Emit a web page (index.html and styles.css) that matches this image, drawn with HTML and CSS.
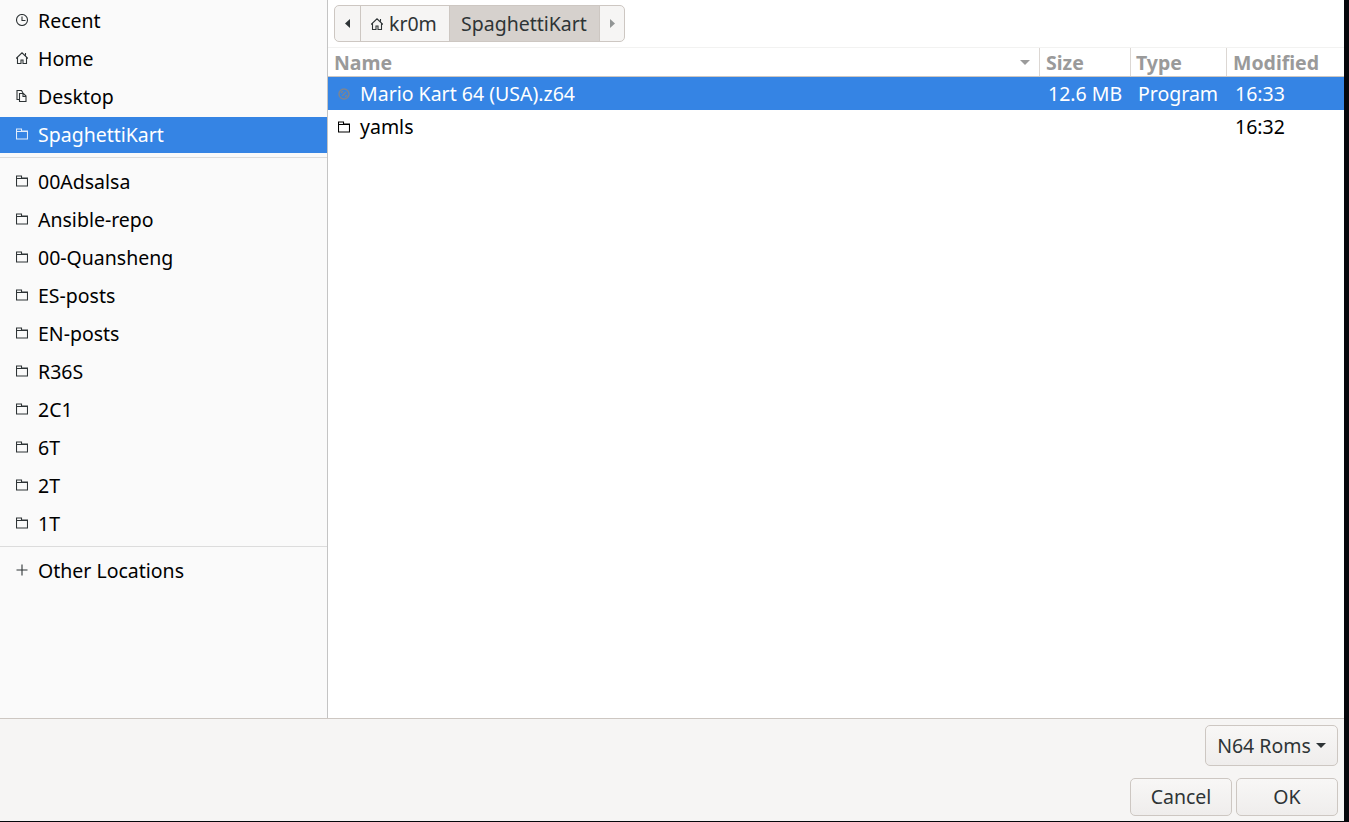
FILE: index.html
```html
<!DOCTYPE html>
<html lang="en">
  <head>
    <meta charset="UTF-8" />
    <title>Open File</title>
    <link rel="stylesheet" href="styles.css">
  </head>

  <body>
    <div class="dialog">
      <div class="panes">
        <!-- places sidebar -->
        <aside class="sidebar">
          <div class="place">
            <svg class="icon" viewBox="0 0 12 12"><circle cx="6" cy="6" r="5.500"/><path d="M6 2.500V6.500H9.500"/></svg>
            <span>Recent</span>
          </div>
          <div class="place">
            <svg class="icon" viewBox="0 0 12 12"><path d="M0 6.500 6 .8l6 5.700M1.500 5.500v6H5V8h2v3.500h3.500v-6M9.500 1v2.500"/></svg>
            <span>Home</span>
          </div>
          <div class="place">
            <svg class="icon" viewBox="0 0 12 12"><path d="M3.500 9.500h-2.500V.5h4.500l1.500 2.500M3.500 3.500h4l2.500 2.500v5.500H3.500zM7 3.500V6.500h3"/></svg>
            <span>Desktop</span>
          </div>
          <div class="place active">
            <svg class="icon" viewBox="0 0 12 12"><path d="M.5 1h5v2h6v8H.5zM.5 3.500h11"/></svg>
            <span>SpaghettiKart</span>
          </div>
          <hr class="sep">
          <div class="place">
            <svg class="icon" viewBox="0 0 12 12"><path d="M.5 1h5v2h6v8H.5zM.5 3.500h11"/></svg>
            <span>00Adsalsa</span>
          </div>
          <div class="place">
            <svg class="icon" viewBox="0 0 12 12"><path d="M.5 1h5v2h6v8H.5zM.5 3.500h11"/></svg>
            <span>Ansible-repo</span>
          </div>
          <div class="place">
            <svg class="icon" viewBox="0 0 12 12"><path d="M.5 1h5v2h6v8H.5zM.5 3.500h11"/></svg>
            <span>00-Quansheng</span>
          </div>
          <div class="place">
            <svg class="icon" viewBox="0 0 12 12"><path d="M.5 1h5v2h6v8H.5zM.5 3.500h11"/></svg>
            <span>ES-posts</span>
          </div>
          <div class="place">
            <svg class="icon" viewBox="0 0 12 12"><path d="M.5 1h5v2h6v8H.5zM.5 3.500h11"/></svg>
            <span>EN-posts</span>
          </div>
          <div class="place">
            <svg class="icon" viewBox="0 0 12 12"><path d="M.5 1h5v2h6v8H.5zM.5 3.500h11"/></svg>
            <span>R36S</span>
          </div>
          <div class="place">
            <svg class="icon" viewBox="0 0 12 12"><path d="M.5 1h5v2h6v8H.5zM.5 3.500h11"/></svg>
            <span>2C1</span>
          </div>
          <div class="place">
            <svg class="icon" viewBox="0 0 12 12"><path d="M.5 1h5v2h6v8H.5zM.5 3.500h11"/></svg>
            <span>6T</span>
          </div>
          <div class="place">
            <svg class="icon" viewBox="0 0 12 12"><path d="M.5 1h5v2h6v8H.5zM.5 3.500h11"/></svg>
            <span>2T</span>
          </div>
          <div class="place">
            <svg class="icon" viewBox="0 0 12 12"><path d="M.5 1h5v2h6v8H.5zM.5 3.500h11"/></svg>
            <span>1T</span>
          </div>
          <hr class="sep">
          <div class="place">
            <svg class="icon" viewBox="0 0 12 12"><path d="M6 .5v11M.5 6h11"/></svg>
            <span>Other Locations</span>
          </div>
        </aside>

        <main class="files">
          <div class="pathrow">
            <div class="pathbar">
              <div class="arrow"><svg width="6" height="9" viewBox="0 0 6 9"><path d="M5 0v9L0 4.500z" fill="#2e3436"/></svg></div>
              <div class="crumb">
                <svg class="icon" viewBox="0 0 12 12"><path d="M0 6.500 6 .8l6 5.700M1.500 5.500v6H5V8h2v3.500h3.500v-6M9.500 1v2.500"/></svg>
                <span>kr0m</span>
              </div>
              <div class="crumb current">SpaghettiKart</div>
              <div class="arrow right"><svg width="6" height="9" viewBox="0 0 6 9"><path d="M1 0v9l5-4.500z" fill="#929595"/></svg></div>
            </div>
          </div>

          <div class="cols head">
            <div class="name">Name<svg class="sort" width="10" height="5" viewBox="0 0 10 5"><path d="M0 0h10L5 5z" fill="#9b9b9b"/></svg></div>
            <div class="size">Size</div>
            <div class="type">Type</div>
            <div class="mod">Modified</div>
          </div>

          <div class="cols row selected">
            <div class="name">
              <svg class="fileicon" viewBox="0 0 12 12"><circle cx="6" cy="6" r="5" fill="none" stroke="#7d8590" stroke-width="1.500"/><path d="M3 5 5 3M7 9l2-2M4 8 8 4" stroke="#7d8590" stroke-width="1.500"/></svg>
              <span>Mario Kart 64 (USA).z64</span>
            </div>
            <div class="size">12.6 MB</div>
            <div class="type">Program</div>
            <div class="mod">16:33</div>
          </div>
          <div class="cols row">
            <div class="name">
              <svg class="fileicon dark" viewBox="0 0 12 12"><path d="M.5 1h5v2h6v8H.5zM.5 3.500h11"/></svg>
              <span>yamls</span>
            </div>
            <div class="size"></div>
            <div class="type"></div>
            <div class="mod">16:32</div>
          </div>
        </main>
      </div>

      <footer class="actions">
        <div class="filter">
          <button type="button" class="btn combo">N64 Roms<i class="caret"></i></button>
        </div>
        <div class="confirm">
          <button type="button" class="btn cancel">Cancel</button>
          <button type="button" class="btn ok">OK</button>
        </div>
      </footer>
    </div>
  </body>
</html>
```

FILE: styles.css
```css
* {
  box-sizing: border-box;
  margin: 0;
  padding: 0;
}

html, body {
  height: 100%;
}

body {
  background: #05070b;
  font-family: "Noto Sans", sans-serif;
  font-size: 19.5px;
  color: #000;
  overflow: hidden;
}

.dialog {
  width: 1344px;
  height: 821px;
  display: flex;
  flex-direction: column;
  background: #f6f5f4;
}

.panes {
  height: 718px;
  display: flex;
  background: #fff;
}

/* sidebar */
.sidebar {
  width: 328px;
  flex: none;
  padding-top: 1px;
  background: #fafafa;
  border-right: 1px solid #c4c4c4;
}

.place {
  height: 38px;
  display: flex;
  align-items: center;
  padding-left: 16px;
  gap: 10px;
}

.place.active {
  background: #3584e4;
  color: #fff;
  height: 36px;
  margin-top: 2px;
  margin-bottom: 1px;
  padding-bottom: 2px;
}

.icon {
  width: 12px;
  height: 12px;
  flex: none;
  fill: none;
  stroke: #2e3436;
  stroke-width: 1.100;
}

.active .icon {
  stroke: #fff;
  opacity: .85;
}

.sep {
  border: 0;
  border-top: 1px solid #dcdcdc;
  margin: 4px 0;
  height: 1px;
}

/* path bar */
.files {
  flex: 1;
  min-width: 0;
}

.pathrow {
  height: 48px;
  padding: 5px 0 0 6px;
  border-bottom: 1px solid #f2f2f1;
}

.pathbar {
  display: inline-flex;
  height: 37px;
  border: 1px solid #cdc7c2;
  border-radius: 5px;
  overflow: hidden;
  color: #2e3436;
  background: #f6f5f4;
}

.arrow {
  width: 26px;
  display: flex;
  align-items: center;
  justify-content: center;
  border-right: 1px solid #cdc7c2;
}

.arrow.right {
  width: 24px;
  border-right: 0;
}

.crumb {
  width: 88px;
  display: flex;
  align-items: center;
  gap: 6px;
  padding-left: 10px;
}

.crumb.current {
  width: 151px;
  background: #d6d1cd;
  padding-left: 11px;
  border-left: 1px solid #cdc7c2;
  border-right: 1px solid #cdc7c2;
}

/* file list */
.cols {
  display: grid;
  grid-template-columns: 712px 91px 96px 1fr;
}

.head {
  height: 29px;
  font-weight: 700;
  color: #9a9a9a;
  border-bottom: 1px solid #cdc7c2;
}

.head > div {
  display: flex;
  align-items: center;
  padding-left: 6px;
  padding-top: 1px;
  border-right: 1px solid #dcd7d3;
}

.head > .type {
  padding-left: 5px;
}

.head > .mod {
  border-right: 0;
}

.sort {
  margin-left: auto;
  margin-right: 9px;
}

.row {
  height: 33px;
  line-height: 33px;
}

.row .name {
  display: flex;
  align-items: center;
  padding-left: 10px;
  gap: 10px;
}

.row .size {
  padding-left: 8px;
}

.row .type {
  padding-left: 7px;
}

.row .mod {
  padding-left: 8px;
}

.selected {
  background: #3584e4;
  color: #fff;
}

.fileicon {
  width: 12px;
  height: 12px;
  flex: none;
}

.fileicon.dark {
  fill: none;
  stroke: #000;
  stroke-width: 1.100;
}

/* bottom buttons */
.actions {
  flex: 1;
  border-top: 1px solid #cdc7c2;
  padding: 6px 6px 0 0;
  display: flex;
  flex-direction: column;
  align-items: flex-end;
  gap: 12px;
}

.filter,
.confirm {
  display: flex;
  gap: 4px;
}

.btn {
  height: 38px;
  font: inherit;
  color: #2e3436;
  border: 1px solid #cdc7c2;
  border-radius: 5px;
  padding-bottom: 2px;
  background: linear-gradient(#f8f7f6, #efedec);
}

.combo {
  width: 133px;
  height: 41px;
  display: flex;
  align-items: center;
  justify-content: center;
  gap: 5px;
  padding-bottom: 0;
}

.caret {
  width: 0;
  height: 0;
  border-left: 5px solid transparent;
  border-right: 5px solid transparent;
  border-top: 5px solid #2e3436;
}

.cancel,
.ok {
  width: 102px;
}
```
